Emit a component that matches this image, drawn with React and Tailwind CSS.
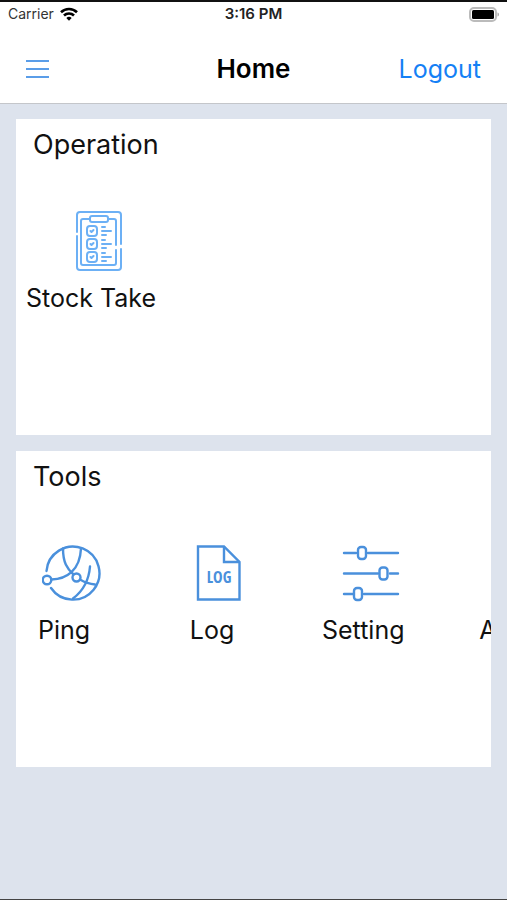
const operations = [{ name: 'Stock Take', icon: ChecklistIcon }];

const tools = [
  { name: 'Ping', icon: GlobeIcon },
  { name: 'Log', icon: LogIcon },
  { name: 'Setting', icon: SlidersIcon },
  { name: 'About', icon: AboutIcon },
];

function ChecklistIcon() {
  return (
    <svg viewBox="0 0 60 60" className="size-15" fill="none" stroke="#6cb0f5" strokeWidth="2" strokeLinecap="round" strokeLinejoin="round">
      <path d="M8 21V4a3 3 0 0 1 3-3h38a3 3 0 0 1 3 3v29M52 38v18a3 3 0 0 1-3 3H11a3 3 0 0 1-3-3V25" />
      <path d="M20 8h-6a2 2 0 0 0-2 2v42a2 2 0 0 0 2 2h31a2 2 0 0 0 2-2V39M47 34V10a2 2 0 0 0-2-2h-6" />
      <rect x="21" y="5" width="18" height="6" rx="2" />
      {[15, 28, 41].map(y => (
        <g key={y}>
          <rect x="18" y={y} width="10" height="10" rx="3" />
          <path d={`M21.500 ${y + 5}l1 1 2-2M33 ${y + 1}h3M33 ${y + 5}h9M33 ${y + 9}h4`} />
        </g>
      ))}
    </svg>
  );
}

function GlobeIcon() {
  return (
    <svg viewBox="0 0 60 60" className="size-15" fill="none" stroke="#4a90dc" strokeWidth="2.400" strokeLinecap="round">
      <path d="M4.500 28A26.500 26.500 0 1 1 9 45" />
      <circle cx="5" cy="37" r="4.300" />
      <circle cx="34.500" cy="34.500" r="4" />
      <path d="M9.500 36.500C25 36 38 27 39 5.500M21 5.500c0 14 4 20 10.500 26M38 36.500c5 3 9 4.500 15 5M48 23.500C47 36 41 48 31 55.500" />
    </svg>
  );
}

function LogIcon() {
  return (
    <svg viewBox="0 0 60 60" className="size-15" fill="none" stroke="#4a90dc" strokeWidth="2.400">
      <path d="M8 3.500h26l15.500 15.500v37.500H8z" />
      <path d="M34 3.500v15.500h15.500" />
      <text x="29" y="40" textAnchor="middle" fill="#4a90dc" stroke="none" className="font-['Open_Sans_Condensed','Noto_Sans','Liberation_Sans',sans-serif] text-[16px] font-bold">LOG</text>
    </svg>
  );
}

function SlidersIcon() {
  return (
    <svg viewBox="0 0 60 60" className="size-15" fill="none" stroke="#4a90dc" strokeWidth="2.400" strokeLinecap="round">
      <path d="M3 10h12M27 10h30M3 30.500h34M49 30.500h8M3 51h9M23 51h34" />
      <rect x="17" y="4" width="8" height="12" rx="3" />
      <rect x="38.500" y="24.500" width="8" height="12" rx="3" />
      <rect x="13" y="45" width="8" height="12" rx="3" />
    </svg>
  );
}

function AboutIcon() {
  return (
    <svg viewBox="0 0 60 60" className="size-15" fill="none" stroke="#4a90dc" strokeWidth="2.400" strokeLinecap="round">
      <circle cx="30" cy="30" r="26" />
      <path d="M30 27v16M30 18v1" />
    </svg>
  );
}

function StatusBar() {
  return (
    <div className="grid grid-cols-3 items-center h-6 px-2 text-[14px] leading-6">
      <div className="flex items-center gap-1.5 text-[#333]">
        <span>Carrier</span>
        <svg viewBox="0 0 18 14" className="w-[18px] h-[14px]" fill="none" stroke="#000" strokeWidth="2.600" aria-label="Wi-Fi">
          <path d="M1 5.300a11.500 11.500 0 0 1 16 0M4 8.500a7.200 7.200 0 0 1 10 0" />
          <path d="M6.300 11a4 4 0 0 1 5.400 0L9 13.800z" fill="#000" stroke="none" />
        </svg>
      </div>
      <span className="text-center text-[15px] font-semibold text-[#222]">3:16 PM</span>
      <svg viewBox="0 0 31 15" className="w-[31px] h-[15px] justify-self-end" fill="none" aria-label="Battery">
        <rect x="2" y="1" width="26" height="13" rx="4" stroke="#bbb" strokeWidth="2" />
        <rect x="4" y="3" width="22" height="9" rx="1.500" fill="#000" />
        <path d="M29.500 5.500v4c2-.6 2-3.400 0-4z" fill="#aaa" />
      </svg>
    </div>
  );
}

function Section({ title, items }) {
  return (
    <section className="bg-white pb-[119px]">
      <h2 className="px-[17px] pt-2 text-[27px] leading-9">{title}</h2>
      <div className="flex gap-[72px] mt-12 pl-[10px] overflow-x-auto [scrollbar-width:none]">
        {items.map(({ name, icon: Icon }) => (
          <button key={name} type="button" className="flex shrink-0 flex-col items-center min-w-[76px]">
            <span className="pl-4"><Icon /></span>
            <span className="mt-[9px] text-[25px] leading-9 whitespace-nowrap">{name}</span>
          </button>
        ))}
      </div>
    </section>
  );
}

export default function App() {
  return (
    <div className="flex flex-col min-h-screen bg-[#dde3ed] border-t-2 border-t-[#111] border-b border-b-[#444] font-[Inter,'Liberation_Sans',sans-serif] text-[#111]">
      <header className="bg-white border-b border-[#c4c6ca]">
        <StatusBar />
        <nav className="grid grid-cols-3 items-center h-[77px] px-[26px] pt-2 text-[25px] leading-9">
          <button type="button" aria-label="Menu" className="justify-self-start">
            <svg viewBox="0 0 23 20" className="w-[23px] h-5" stroke="#5a9de8" strokeWidth="2">
              <path d="M0 2h23M0 10h23M0 18h23" />
            </svg>
          </button>
          <h1 className="text-center text-[26px] font-semibold text-black">Home</h1>
          <a href="#logout" className="justify-self-end text-[#1480f5]">Logout</a>
        </nav>
      </header>
      <main className="flex flex-col gap-4 px-4 pt-[15px]">
        <Section title="Operation" items={operations} />
        <Section title="Tools" items={tools} />
      </main>
    </div>
  );
}
